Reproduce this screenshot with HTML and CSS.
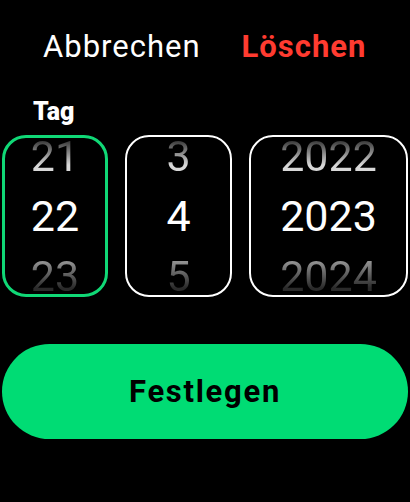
FILE: index.html
```html
<!DOCTYPE html>
<html lang="de">
<head>
<meta charset="utf-8">
<link rel="stylesheet" href="styles.css">
</head>
<body>
<div class="screen">
  <div class="topbar">
    <span class="cancel">Abbrechen</span>
    <span class="delete">Löschen</span>
  </div>
  <div class="label">Tag</div>
  <div class="pickers">
    <div class="wheel day active">
      <div class="num prev">21</div>
      <div class="num cur">22</div>
      <div class="num next">23</div>
    </div>
    <div class="wheel month">
      <div class="num prev">3</div>
      <div class="num cur">4</div>
      <div class="num next">5</div>
    </div>
    <div class="wheel year">
      <div class="num prev">2022</div>
      <div class="num cur">2023</div>
      <div class="num next">2024</div>
    </div>
  </div>
  <div class="action">Festlegen</div>
</div>
</body>
</html>
```
FILE: styles.css
```css
html, body {
  margin: 0;
  padding: 0;
  background: #000;
}
.screen {
  width: 410px;
  height: 502px;
  background: #000;
  font-family: Roboto, "Liberation Sans", sans-serif;
  color: #fff;
  display: flex;
  flex-direction: column;
  padding: 0 2px;
  box-sizing: border-box;
}
.topbar {
  display: flex;
  height: 92px;
  align-items: center;
  padding-left: 41px;
  gap: 41px;
  font-size: 31px;
  letter-spacing: 1px;
}
.cancel {
  font-weight: 400;
  color: #fff;
}
.delete {
  font-weight: 700;
  color: #ff3b30;
}
.label {
  font-weight: 900;
  font-size: 25px;
  padding-left: 31px;
  height: 43px;
  line-height: 40px;
}
.pickers {
  display: flex;
  gap: 17px;
  height: 162px;
}
.wheel {
  box-sizing: border-box;
  border: 2.5px solid #fff;
  border-radius: 24px;
  height: 162px;
  overflow: hidden;
  display: flex;
  flex-direction: column;
  align-items: center;
  justify-content: center;
}
.wheel.active {
  border: 3px solid #10d876;
}
.day { width: 106px; }
.month { width: 107px; }
.year { width: 159px; }
.num {
  flex: none;
  height: 60px;
  line-height: 60px;
  font-size: 43px;
  font-weight: 400;
}
.num.prev {
  background: linear-gradient(to bottom, #3a3a3a 25%, #d8d8d8 65%);
  -webkit-background-clip: text;
  background-clip: text;
  color: transparent;
}
.num.next {
  background: linear-gradient(to bottom, #a0a0a0 20%, #2a2a2a 70%);
  -webkit-background-clip: text;
  background-clip: text;
  color: transparent;
}
.action {
  margin-top: 47px;
  height: 95px;
  border-radius: 48px;
  background: #00dc74;
  color: #000;
  font-weight: 700;
  font-size: 31px;
  letter-spacing: 1.7px;
  display: flex;
  align-items: center;
  justify-content: center;
}
```
